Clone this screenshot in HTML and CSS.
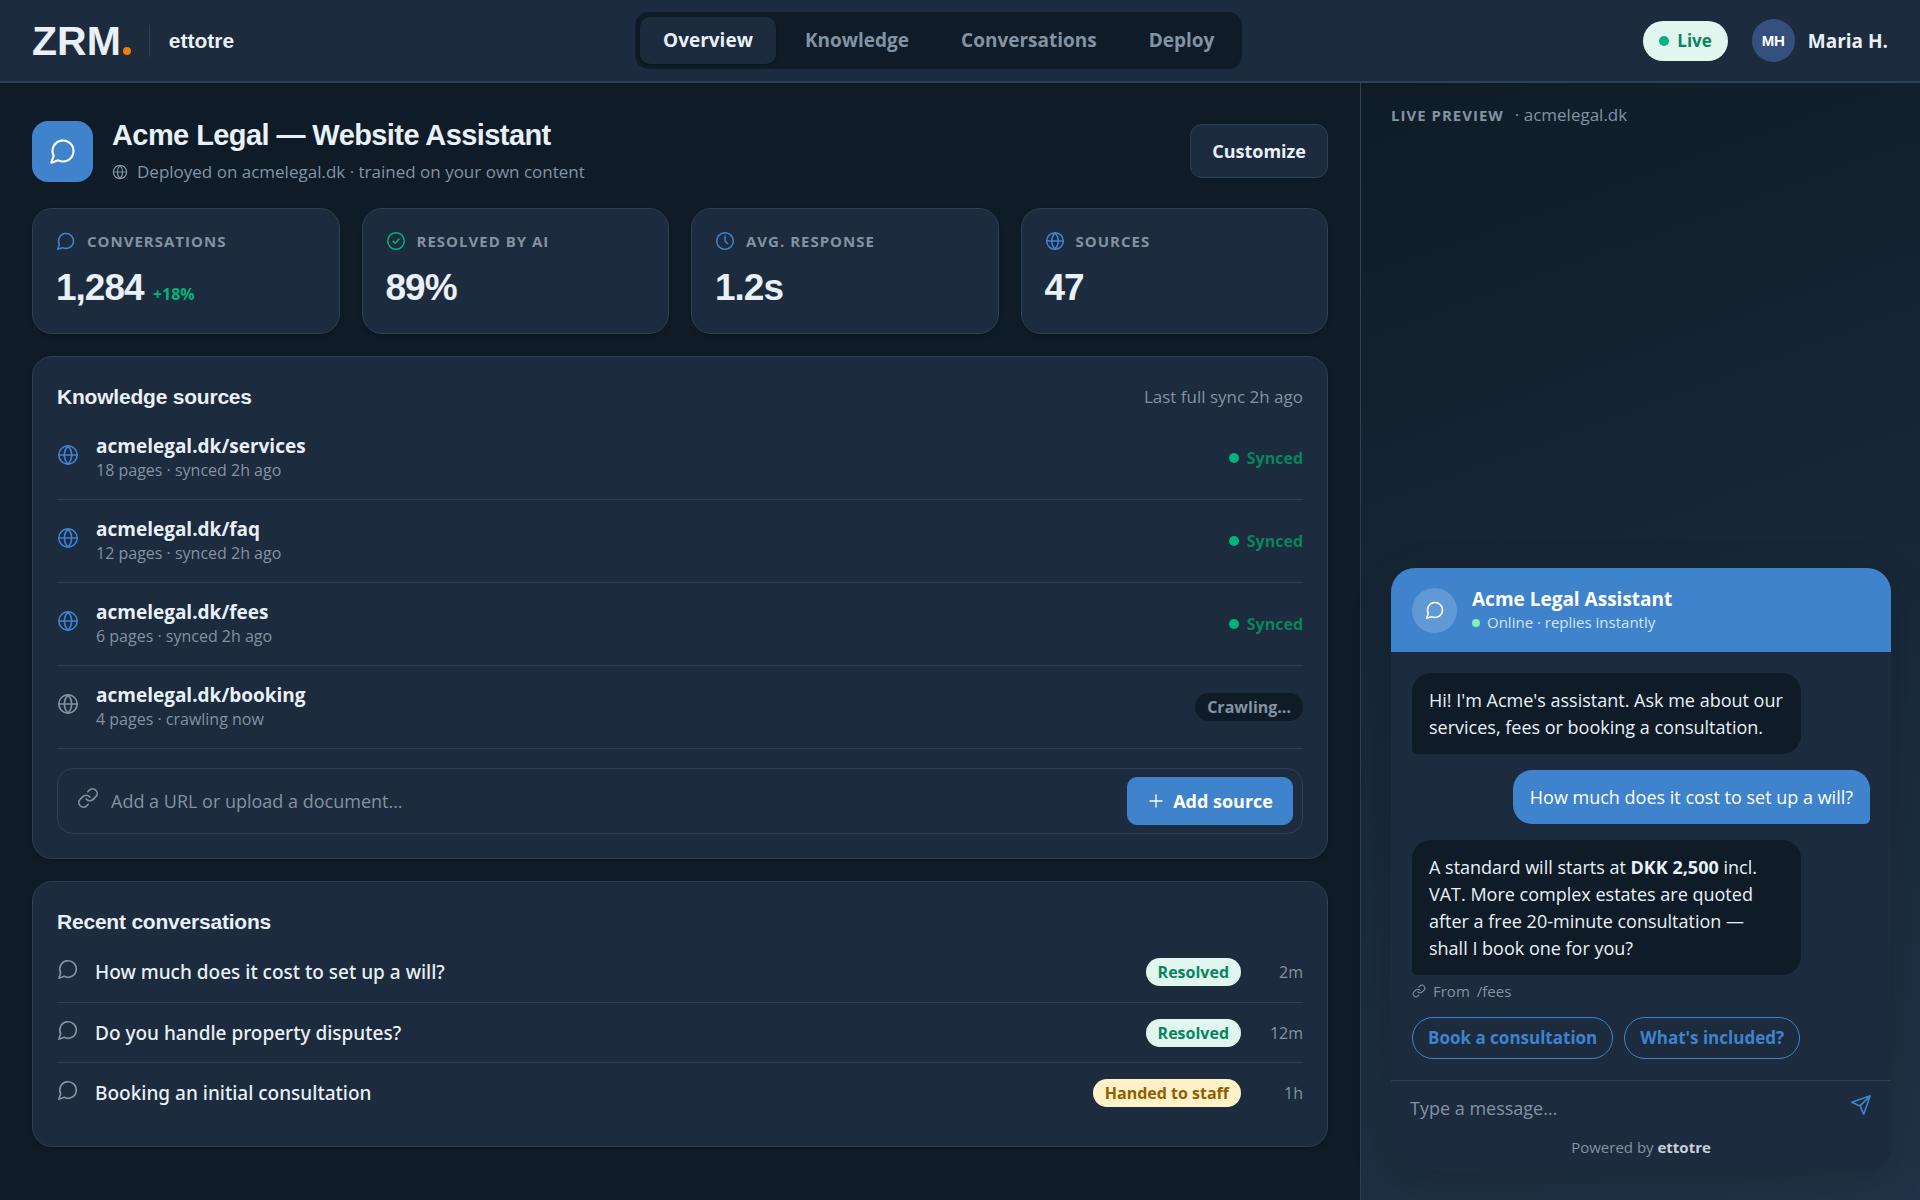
FILE: index.html
```html
<!DOCTYPE html>
<html lang="en">
<head>
<meta charset="utf-8">
<meta name="viewport" content="width=device-width, initial-scale=1">
<title>Acme Legal — Website Assistant</title>
<link rel="stylesheet" href="styles.css">
</head>
<body>
<svg class="sprite" aria-hidden="true">
  <symbol id="bubble" viewBox="0 0 24 24"><path d="M7.9 20A9 9 0 1 0 4 16.100L2 22z"/></symbol>
  <symbol id="globe" viewBox="0 0 24 24"><circle cx="12" cy="12" r="10"/><path d="M2 12h20M12 2a15.300 15.300 0 0 1 4 10 15.300 15.300 0 0 1-4 10 15.300 15.300 0 0 1-4-10 15.300 15.300 0 0 1 4-10z"/></symbol>
  <symbol id="check" viewBox="0 0 24 24"><circle cx="12" cy="12" r="10"/><path d="m8.500 12.200 2.500 2.500 4.700-5"/></symbol>
  <symbol id="clock" viewBox="0 0 24 24"><circle cx="12" cy="12" r="10"/><path d="M12 6v6l3 3"/></symbol>
  <symbol id="link" viewBox="0 0 24 24"><path d="M10 13a5 5 0 0 0 7.540.540l3-3a5 5 0 0 0-7.070-7.070l-1.720 1.710"/><path d="M14 11a5 5 0 0 0-7.540-.540l-3 3a5 5 0 0 0 7.070 7.070l1.710-1.710"/></symbol>
  <symbol id="plus" viewBox="0 0 24 24"><path d="M12 4v16M4 12h16"/></symbol>
  <symbol id="send" viewBox="0 0 24 24"><path d="M22 2 11 13M22 2l-7 20-4-9-9-4z"/></symbol>
</svg>

<header class="topbar">
  <div class="brand">
    <span class="logo">ZRM<i class="logo-dot"></i></span>
    <span class="brand-name">ettotre</span>
  </div>
  <nav class="tabs">
    <a class="tab tab-active" href="#overview" aria-current="page">Overview</a>
    <a class="tab" href="#knowledge">Knowledge</a>
    <a class="tab" href="#conversations">Conversations</a>
    <a class="tab" href="#deploy">Deploy</a>
  </nav>
  <div class="account">
    <span class="live"><i class="dot"></i>Live</span>
    <div class="user"><span class="avatar">MH</span><span>Maria H.</span></div>
  </div>
</header>

<div class="layout">
  <main class="main">
    <section class="hero">
      <span class="hero-icon"><svg class="icon icon-l"><use href="#bubble"/></svg></span>
      <div class="hero-text">
        <h1>Acme Legal — Website Assistant</h1>
        <p><svg class="icon icon-s"><use href="#globe"/></svg>Deployed on acmelegal.dk · trained on your own content</p>
      </div>
      <button class="btn" type="button">Customize</button>
    </section>

    <section class="stats">
      <article class="card stat">
        <h2><svg class="icon icon-m blue"><use href="#bubble"/></svg>Conversations</h2>
        <p class="value">1,284 <span class="delta">+18%</span></p>
      </article>
      <article class="card stat">
        <h2><svg class="icon icon-m green"><use href="#check"/></svg>Resolved by AI</h2>
        <p class="value">89%</p>
      </article>
      <article class="card stat">
        <h2><svg class="icon icon-m blue"><use href="#clock"/></svg>Avg. response</h2>
        <p class="value">1.2s</p>
      </article>
      <article class="card stat">
        <h2><svg class="icon icon-m blue"><use href="#globe"/></svg>Sources</h2>
        <p class="value">47</p>
      </article>
    </section>

    <section class="card panel">
      <div class="panel-head"><h2>Knowledge sources</h2><span>Last full sync 2h ago</span></div>
      <ul class="sources">
        <li><svg class="icon icon-row blue"><use href="#globe"/></svg><div class="source"><strong>acmelegal.dk/services</strong><span>18 pages · synced 2h ago</span></div><span class="synced"><i class="dot"></i>Synced</span></li>
        <li><svg class="icon icon-row blue"><use href="#globe"/></svg><div class="source"><strong>acmelegal.dk/faq</strong><span>12 pages · synced 2h ago</span></div><span class="synced"><i class="dot"></i>Synced</span></li>
        <li><svg class="icon icon-row blue"><use href="#globe"/></svg><div class="source"><strong>acmelegal.dk/fees</strong><span>6 pages · synced 2h ago</span></div><span class="synced"><i class="dot"></i>Synced</span></li>
        <li><svg class="icon icon-row"><use href="#globe"/></svg><div class="source"><strong>acmelegal.dk/booking</strong><span>4 pages · crawling now</span></div><span class="pill pill-dark">Crawling…</span></li>
      </ul>
      <form class="add">
        <svg class="icon icon-row"><use href="#link"/></svg>
        <input type="text" placeholder="Add a URL or upload a document…" aria-label="Add a URL or upload a document">
        <button class="btn btn-primary" type="button"><svg class="icon icon-plus"><use href="#plus"/></svg>Add source</button>
      </form>
    </section>

    <section class="card panel">
      <div class="panel-head"><h2>Recent conversations</h2></div>
      <ul class="recent">
        <li><svg class="icon icon-row"><use href="#bubble"/></svg><span class="question">How much does it cost to set up a will?</span><span class="pill pill-green">Resolved</span><time>2m</time></li>
        <li><svg class="icon icon-row"><use href="#bubble"/></svg><span class="question">Do you handle property disputes?</span><span class="pill pill-green">Resolved</span><time>12m</time></li>
        <li><svg class="icon icon-row"><use href="#bubble"/></svg><span class="question">Booking an initial consultation</span><span class="pill pill-amber">Handed to staff</span><time>1h</time></li>
      </ul>
    </section>
  </main>

  <aside class="preview">
    <p class="preview-label"><b>Live preview</b><span>· acmelegal.dk</span></p>
    <section class="widget">
      <header class="widget-head">
        <span class="widget-avatar"><svg class="icon icon-m"><use href="#bubble"/></svg></span>
        <div>
          <h2>Acme Legal Assistant</h2>
          <p><i class="dot dot-mint"></i>Online · replies instantly</p>
        </div>
      </header>
      <div class="chat">
        <p class="msg msg-bot">Hi! I'm Acme's assistant. Ask me about our services, fees or booking a consultation.</p>
        <p class="msg msg-user">How much does it cost to set up a will?</p>
        <div class="answer">
          <p class="msg msg-bot">A standard will starts at <b>DKK 2,500</b> incl. VAT. More complex estates are quoted after a free 20-minute consultation — shall I book one for you?</p>
          <p class="cite"><svg class="icon icon-xs"><use href="#link"/></svg><span>From</span><span>/fees</span></p>
        </div>
        <div class="replies">
          <button type="button">Book a consultation</button>
          <button type="button">What's included?</button>
        </div>
      </div>
      <footer class="composer">
        <div class="composer-row">
          <input type="text" placeholder="Type a message…" aria-label="Type a message">
          <button type="button" aria-label="Send"><svg class="icon icon-row"><use href="#send"/></svg></button>
        </div>
        <p>Powered by <b>ettotre</b></p>
      </footer>
    </section>
  </aside>
</div>
</body>
</html>
```
FILE: styles.css
```css
:root {
  --bg: #0f1c28;
  --surface: #1c2b3d;
  --line: #2b4254;
  --text: #e9f0f7;
  --muted: #8293a3;
  --blue: #3f83cd;
  --green: #00b37e;
  --green-dark: #08855f;
  --mint: #e0f6ee;
  --display: "Liberation Sans", Arial, sans-serif;
}

* { box-sizing: border-box; }

body {
  margin: 0;
  min-height: 100vh;
  display: flex;
  flex-direction: column;
  background: var(--bg);
  color: var(--text);
  font: 16px/24px "Open Sans", "Noto Sans", sans-serif;
}

h1, h2, p, ul { margin: 0; padding: 0; }
ul { list-style: none; }
a { color: inherit; text-decoration: none; }
button, input { font: inherit; color: inherit; }
button { cursor: pointer; }

.sprite { display: none; }

.icon {
  flex: none;
  fill: none;
  stroke: currentColor;
  stroke-width: 1.8;
  stroke-linecap: round;
  stroke-linejoin: round;
}
.icon-xs { width: 14px; height: 14px; }
.icon-s { width: 16px; height: 16px; }
.icon-plus { width: 18px; height: 18px; }
.icon-m { width: 20px; height: 20px; }
.icon-row { width: 22px; height: 22px; margin-bottom: 6px; }
.icon-l { width: 28px; height: 28px; }
.blue { color: var(--blue); }
.green { color: var(--green); }

.dot {
  flex: none;
  width: 10px;
  height: 10px;
  border-radius: 50%;
  background: var(--green);
}
.dot-mint { width: 8px; height: 8px; background: #7df0bd; }

/* Top bar */
.topbar {
  display: flex;
  justify-content: space-between;
  align-items: center;
  padding: 12px 32px;
  background: var(--surface);
  border-bottom: 2px solid var(--line);
}
.brand { display: flex; align-items: center; }
.logo {
  display: flex;
  align-items: baseline;
  gap: 2px;
  padding-right: 18px;
  font: bold 41px/32px var(--display);
  border-right: 1px solid var(--line);
}
.logo-dot {
  width: 8px;
  height: 8px;
  border-radius: 50%;
  background: #f07d0c;
}
.brand-name { padding-left: 19px; font: bold 21px/24px var(--display); }

.tabs {
  display: flex;
  gap: 6px;
  padding: 5px;
  border-radius: 14px;
  background: var(--bg);
}
.tab {
  padding: 12px 23px;
  border-radius: 10px;
  color: var(--muted);
  font-size: 19px;
  font-weight: 700;
  line-height: 23px;
}
.tab-active {
  background: var(--surface);
  color: var(--text);
  box-shadow: 0 1px 3px rgba(0, 0, 0, .4);
}

.account { display: flex; align-items: center; gap: 24px; }
.live {
  display: flex;
  align-items: center;
  gap: 8px;
  padding: 8px 16px;
  border-radius: 20px;
  background: var(--mint);
  color: var(--green-dark);
  font-size: 17px;
  font-weight: 700;
}
.user { display: flex; align-items: center; gap: 13px; font-size: 19px; font-weight: 700; }
.avatar {
  display: grid;
  place-items: center;
  width: 43px;
  height: 43px;
  border-radius: 50%;
  background: #35507e;
  color: #fff;
  font: bold 15px/20px var(--display);
}

/* Page columns */
.layout { flex: 1; display: grid; grid-template-columns: minmax(0, 1fr) 560px; }
.main { display: flex; flex-direction: column; gap: 22px; padding: 35px 32px; }

.hero { display: flex; align-items: center; gap: 19px; margin-bottom: 2px; }
.hero-icon {
  display: grid;
  place-items: center;
  width: 61px;
  height: 61px;
  border-radius: 16px;
  background: var(--blue);
  color: #fff;
}
.hero-text { flex: 1; }
.hero h1 { font: bold 29px/34px var(--display); letter-spacing: -0.02em; }
.hero p { display: flex; align-items: center; gap: 9px; margin-top: 8px; font-size: 17px; color: var(--muted); }

.btn {
  padding: 14px 21px;
  border: 1px solid var(--line);
  border-radius: 12px;
  background: var(--surface);
  font-size: 18px;
  font-weight: 700;
}

.card {
  border: 1px solid var(--line);
  border-radius: 20px;
  background: var(--surface);
  box-shadow: 0 2px 4px rgba(0, 0, 0, .25);
}

.stats { display: grid; grid-template-columns: repeat(4, minmax(0, 1fr)); gap: 22px; }
.stat { padding: 20px 23px 23px; }
.stat h2 {
  display: flex;
  align-items: center;
  gap: 11px;
  color: var(--muted);
  font-size: 15px;
  font-weight: 700;
  letter-spacing: 1px;
  text-transform: uppercase;
}
.value { margin-top: 13px; font: bold 37px/44px var(--display); letter-spacing: -1px; }
.delta { font: 700 16px/24px "Open Sans", sans-serif; letter-spacing: 0; color: var(--green); }

.panel { padding: 24px; }
.panel-head {
  display: flex;
  justify-content: space-between;
  align-items: center;
  margin-bottom: 4px;
  font-size: 17px;
  line-height: 32px;
  color: var(--muted);
}
.panel-head h2 { font: bold 21px/32px var(--display); letter-spacing: -0.01em; color: var(--text); }

.sources li {
  display: flex;
  align-items: center;
  gap: 17px;
  height: 83px;
  border-bottom: 1px solid var(--line);
  color: var(--muted);
}
.source { flex: 1; display: flex; flex-direction: column; }
.source strong { color: var(--text); font-size: 19px; font-weight: 700; }
.synced { display: flex; align-items: center; gap: 8px; color: var(--green-dark); font-weight: 700; }

.pill {
  padding: 2px 12px;
  border-radius: 14px;
  font-weight: 700;
}
.pill-dark { background: var(--bg); color: var(--muted); }
.pill-green { background: var(--mint); color: var(--green-dark); }
.pill-amber { background: #fff1c8; color: #8f5f00; }

.add {
  display: flex;
  align-items: center;
  gap: 12px;
  margin-top: 19px;
  padding: 8px 9px 8px 19px;
  border: 1px solid var(--line);
  border-radius: 16px;
  color: var(--muted);
}
.add input { flex: 1; min-width: 0; padding: 0; border: 0; outline: 0; background: none; font-size: 18px; }
.add input::placeholder, .composer input::placeholder { color: var(--muted); opacity: 1; }
.btn-primary {
  display: flex;
  align-items: center;
  gap: 8px;
  padding: 11px 19px;
  border-color: var(--blue);
  border-radius: 10px;
  background: var(--blue);
  color: #fff;
}

.recent li {
  display: flex;
  align-items: center;
  gap: 16px;
  height: 60px;
  color: var(--muted);
}
.recent li + li { border-top: 1px solid var(--line); }
.question { flex: 1; color: var(--text); font-family: "Noto Sans", sans-serif; font-size: 19px; font-weight: 500; }
.recent time { min-width: 46px; text-align: right; }

/* Live preview */
.preview {
  display: flex;
  flex-direction: column;
  justify-content: space-between;
  padding: 20px 29px 30px 30px;
  border-left: 1px solid var(--line);
  background: linear-gradient(160deg, var(--bg), #203346);
}
.preview-label { display: flex; gap: 11px; font-size: 17px; color: var(--muted); }
.preview-label b { font-size: 15px; font-weight: 700; letter-spacing: 1px; text-transform: uppercase; }

.widget {
  overflow: hidden;
  border-radius: 24px;
  background: var(--surface);
  box-shadow: 0 10px 40px rgba(0, 0, 0, .15);
}
.widget-head {
  display: flex;
  align-items: center;
  gap: 15px;
  padding: 19px 21px;
  background: var(--blue);
  color: #fff;
}
.widget-avatar {
  display: grid;
  place-items: center;
  width: 45px;
  height: 45px;
  border-radius: 50%;
  background: rgba(255, 255, 255, .18);
}
.widget-head h2 { font-size: 19px; font-weight: 700; line-height: 25px; }
.widget-head p { display: flex; align-items: center; gap: 7px; font-size: 15px; line-height: 21px; color: #d5e5f6; }

.chat { display: flex; flex-direction: column; gap: 16px; padding: 21px; }
.msg {
  align-self: flex-start;
  max-width: 389px;
  padding: 14px 17px 13px;
  border-radius: 19px;
  font-size: 18px;
  line-height: 27px;
}
.msg-bot { background: var(--bg); border-bottom-left-radius: 5px; }
.msg-user { align-self: flex-end; background: var(--blue); color: #fff; border-bottom-right-radius: 5px; }
.cite { display: flex; align-items: center; gap: 7px; margin-top: 6px; font-size: 15px; line-height: 20px; font-weight: 500; color: var(--muted); }
.replies { display: flex; gap: 11px; }
.replies button {
  padding: 8px 15px;
  border: 1px solid var(--blue);
  border-radius: 21px;
  background: none;
  color: var(--blue);
  font-size: 17px;
  font-weight: 700;
}
.composer { padding: 13px 19px 11px; border-top: 1px solid var(--line); color: var(--muted); }
.composer-row { display: flex; align-items: center; }
.composer input { flex: 1; min-width: 0; padding: 0; border: 0; outline: 0; background: none; font-size: 18px; }
.composer button { padding: 0; border: 0; background: none; color: var(--blue); line-height: 0; }
.composer p { margin-top: 13px; font-size: 15px; text-align: center; }
.composer b { color: #c6d2de; font-weight: 700; }
```
